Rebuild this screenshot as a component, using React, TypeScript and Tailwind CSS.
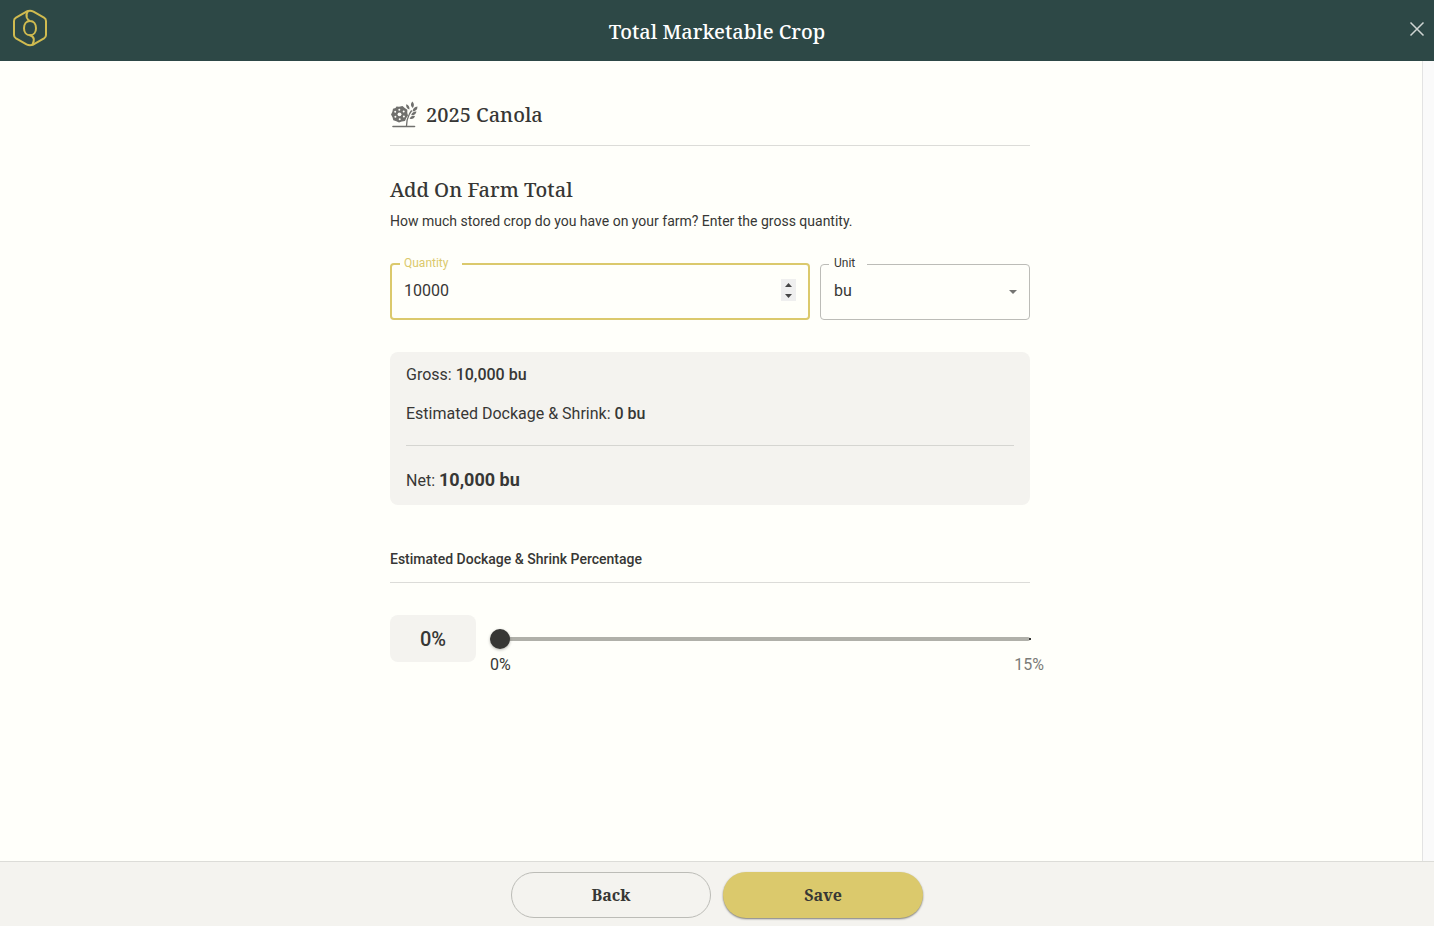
import { useState } from "react";

const UNITS = ["bu", "mt", "lbs"];
const MAX_SHRINK = 15;

const serif = "font-['Noto_Serif','DejaVu_Serif',serif]";

function Logo() {
	return (
		<svg
			viewBox="0 0 36 38"
			className="h-[38px] w-9"
			fill="none"
			stroke="#d0bb50"
			strokeWidth="2"
			strokeLinejoin="round"
			strokeLinecap="round"
			aria-hidden="true"
		>
			<path d="M14.5 2.7 4 8.6Q2 9.8 2 12v14q0 2.2 2 3.4L14.5 35.3q3.5 1.7 7 0" />
			<path d="M14.5 2.7q3.5-1.7 7 0L32 8.6Q34 9.8 34 12v14q0 2.2-2 3.4L21.5 35.3" />
			<path d="M16 2.2q-2.300 2.8-1.200 6.300 1 2.800 3.200 3.500c3.800 0 6 3.200 6 7.200s-2.200 7-6 7-6-3-6-7 2.200-7.200 6-7.200" />
			<path d="M18 26.2q3.300 1 3.800 3.800.3 2.800-1.300 5.500" />
		</svg>
	);
}

function CanolaIcon() {
	return (
		<svg viewBox="0 0 28 28" className="size-7" fill="#70706d" aria-hidden="true">
			<path d="M6.5 5.5 9 5.700 12.500 5 14.800 7 17.300 8.800 17.300 12 18 14.500 16.300 17 15 20 11.800 20.600 9 21.600 6.300 20.200 3.300 19.200 2.500 16.200 1 13.500 2.300 11 3 7.800 5.500 7Z" />
			<g fill="#fffffa">
				<circle cx="9.5" cy="13.3" r="1.900" />
				<circle cx="9.300" cy="8.700" r="1" />
				<circle cx="13.700" cy="10.500" r="1" />
				<circle cx="13.900" cy="15.500" r="1" />
				<circle cx="9.700" cy="18.200" r="1" />
				<circle cx="5.400" cy="15.800" r="1" />
				<circle cx="5.200" cy="10.800" r="1" />
			</g>
			<path
				d="M16.500 25q.2-7 2.700-11.500 1-2 2.500-4"
				fill="none"
				stroke="#70706d"
				strokeWidth="1.300"
			/>
			<path d="M22.300.500q3 3.200.5 6.500-3.500-3-.5-6.500ZM16.200 3.300q3.800 1.300 3.200 5.200-3.800-1.200-3.200-5.200ZM27.500 5.500q0 4.500-5 5Q23 6 27.500 5.500ZM26.500 10.500q-.7 4-5.300 3.600 1.200-3.900 5.300-3.600ZM25 15q-1 3.600-5.400 2.800 1.500-3.700 5.400-2.800Z" />
			<path d="M3 25.500h21.500" stroke="#70706d" strokeWidth="1.600" strokeLinecap="round" />
		</svg>
	);
}

function Header() {
	return (
		<header className="grid h-[61px] shrink-0 grid-cols-[1fr_auto_1fr] items-center bg-[#2d4846] px-2">
			<div className="pb-[5px] pl-1">
				<Logo />
			</div>
			<h1 className={`${serif} pt-[2px] text-xl font-medium text-white`}>
				Total Marketable Crop
			</h1>
			<button type="button" aria-label="Close" className="mb-1 justify-self-end">
				<svg
					viewBox="0 0 18 18"
					className="size-[18px]"
					stroke="#cfd5d3"
					strokeWidth="1.5"
					aria-hidden="true"
				>
					<path d="m2.500 2.500 13 13M15.500 2.500l-13 13" />
				</svg>
			</button>
		</header>
	);
}

type StepperProps = {
	onStep: (delta: number) => void;
};

function Stepper({ onStep }: StepperProps) {
	return (
		<div className="mr-3 flex h-[22px] w-[15px] shrink-0 flex-col bg-[#efefef]">
			<button
				type="button"
				aria-label="Increase quantity"
				onClick={() => onStep(1)}
				className="flex flex-1 items-center justify-center"
			>
				<svg viewBox="0 0 7 4" className="h-1 w-[7px]" fill="#454545" aria-hidden="true">
					<path d="M0 4h7L3.5 0Z" />
				</svg>
			</button>
			<button
				type="button"
				aria-label="Decrease quantity"
				onClick={() => onStep(-1)}
				className="flex flex-1 items-center justify-center"
			>
				<svg viewBox="0 0 7 4" className="h-1 w-[7px]" fill="#454545" aria-hidden="true">
					<path d="M0 0h7L3.5 4Z" />
				</svg>
			</button>
		</div>
	);
}

export default function App() {
	const [quantity, setQuantity] = useState("10000");
	const [unit, setUnit] = useState("bu");
	const [shrink, setShrink] = useState(0);

	const gross = Number(quantity) || 0;
	const loss = Math.round((gross * shrink) / 100);

	return (
		<div className="flex h-screen flex-col bg-[#fffffa] font-[Roboto,sans-serif] text-[#373735]">
			<Header />

			<div className="flex min-h-0 flex-1">
				<main className="flex-1 overflow-hidden pr-[2px]">
					<div className="mx-auto w-full max-w-[640px] pt-10">
						<div className="flex items-center gap-2 border-b border-[#dcdcd8] pb-4">
							<CanolaIcon />
							<h2 className={`${serif} text-xl font-medium`}>2025 Canola</h2>
						</div>

						<h2 className={`${serif} mt-[30px] text-xl font-medium`}>
							Add On Farm Total
						</h2>
						<p className="mt-[7px] text-sm">
							How much stored crop do you have on your farm? Enter the gross quantity.
						</p>

						<div className="mt-6 grid grid-cols-[2fr_1fr] gap-[10px]">
							<fieldset className="h-[65px] min-w-0 rounded border-2 border-[#dbc96c]">
								<legend className="ml-2 h-[18px] w-[62px] pl-1 text-xs leading-4 text-[#dbc96c]">
									<label htmlFor="quantity">Quantity</label>
								</legend>
								<div className="flex items-center">
									<input
										id="quantity"
										type="number"
										value={quantity}
										onChange={(e) => setQuantity(e.target.value)}
										className="h-[34px] min-w-0 flex-1 appearance-none bg-transparent px-3 text-base outline-none [&::-webkit-inner-spin-button]:appearance-none"
									/>
									<Stepper onStep={(delta) => setQuantity(String(gross + delta))} />
								</div>
							</fieldset>
							<fieldset className="h-[65px] min-w-0 rounded border border-[#bcbcb7]">
								<legend className="ml-2 h-[18px] w-[38px] pl-[5px] text-xs leading-4">
									<label htmlFor="unit">Unit</label>
								</legend>
								<div className="relative">
									<select
										id="unit"
										value={unit}
										onChange={(e) => setUnit(e.target.value)}
										className="h-9 w-full appearance-none bg-transparent px-[13px] text-base outline-none"
									>
										{UNITS.map((u) => (
											<option key={u}>{u}</option>
										))}
									</select>
									<svg
										viewBox="0 0 8 4"
										className="pointer-events-none absolute top-[17px] right-3 h-1 w-2"
										fill="#757572"
										aria-hidden="true"
									>
										<path d="M0 0h8L4 4Z" />
									</svg>
								</div>
							</fieldset>
						</div>

						<section className="mt-8 rounded-lg bg-[#f4f3ef] px-4 pt-[11px] pb-[10px]">
							<p>
								Gross: <span className="font-medium">{gross.toLocaleString("en-US")} {unit}</span>
							</p>
							<p className="mt-[15px]">
								Estimated Dockage &amp; Shrink:{" "}
								<span className="font-medium">{loss.toLocaleString("en-US")} {unit}</span>
							</p>
							<hr className="mt-[19px] border-[#d5d5d1]" />
							<p className="mt-5 leading-7">
								Net:{" "}
								<span className="text-lg leading-7 font-bold">
									{(gross - loss).toLocaleString("en-US")} {unit}
								</span>
							</p>
						</section>

						<label
							htmlFor="shrink"
							className="mt-11 block border-b border-[#dcdcd8] pb-[13px] text-sm font-medium"
						>
							Estimated Dockage &amp; Shrink Percentage
						</label>

						<div className="mt-8 flex items-start gap-[14px]">
							<output
								htmlFor="shrink"
								className="flex h-[47px] w-[86px] items-center justify-center rounded-lg bg-[#f4f3ef] text-xl font-medium"
							>
								{shrink}%
							</output>
							<div className="flex-1 pt-[14px]">
								<div className="relative flex">
									<input
										id="shrink"
										type="range"
										min={0}
										max={MAX_SHRINK}
										value={shrink}
										onChange={(e) => setShrink(Number(e.target.value))}
										className="h-5 w-full appearance-none bg-transparent [&::-webkit-slider-runnable-track]:h-1 [&::-webkit-slider-runnable-track]:rounded-full [&::-webkit-slider-runnable-track]:bg-[#b0b0a9] [&::-webkit-slider-thumb]:-mt-2 [&::-webkit-slider-thumb]:size-5 [&::-webkit-slider-thumb]:appearance-none [&::-webkit-slider-thumb]:rounded-full [&::-webkit-slider-thumb]:bg-[#373735] [&::-webkit-slider-thumb]:shadow-[0_1px_3px_rgba(0,0,0,0.3)]"
									/>
									<span className="absolute top-[9px] -right-px size-[2px] bg-[#373735]" />
								</div>
								<div className="-mr-[14px] mt-1 flex justify-between">
									<span>0%</span>
									<span className="text-[#7b7b78]">{MAX_SHRINK}%</span>
								</div>
							</div>
						</div>
					</div>
				</main>
				<div className="w-3 border-l border-[#e3e3e3] bg-[#fafafa]" />
			</div>

			<footer className="flex shrink-0 justify-center gap-3 border-t border-[#dcdcd8] bg-[#f4f3ef] pt-[10px] pb-2">
				<button
					type="button"
					className={`${serif} h-[46px] w-[200px] rounded-full border border-[#bcbcb7] font-bold`}
				>
					Back
				</button>
				<button
					type="button"
					className={`${serif} h-[46px] w-[200px] rounded-full bg-[#dbc96c] font-bold shadow-[0_1px_2px_rgba(0,0,0,0.5)]`}
				>
					Save
				</button>
			</footer>
		</div>
	);
}
